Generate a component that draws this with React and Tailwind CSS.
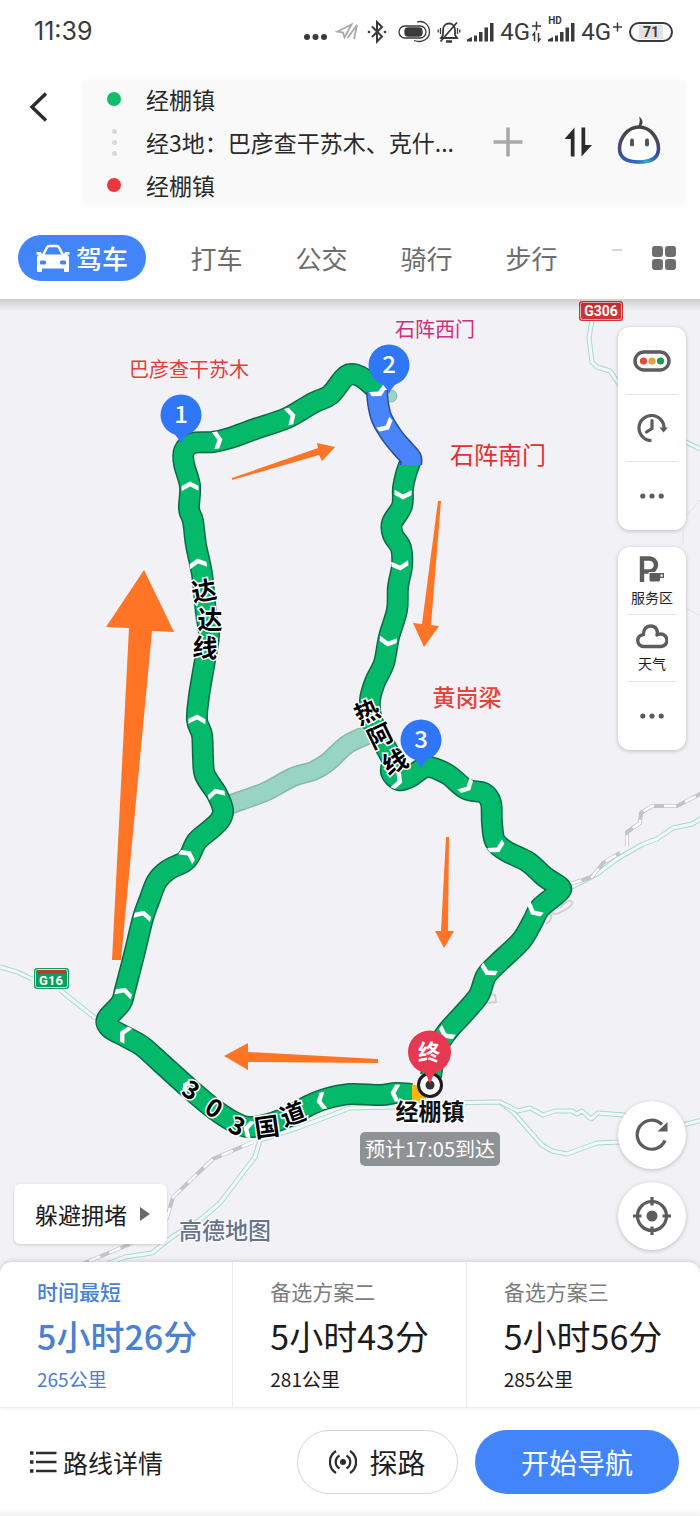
import React, { useState } from "react";

const FONT = "font-['Noto_Sans_CJK_SC',sans-serif]";

const TRAVEL_MODES = ["驾车", "打车", "公交", "骑行", "步行"];

const ROUTES = [
  { id: 1, title: "时间最短", time: "5小时26分", distance: "265公里" },
  { id: 2, title: "备选方案二", time: "5小时43分", distance: "281公里" },
  { id: 3, title: "备选方案三", time: "5小时56分", distance: "285公里" },
];

// Route geometry, in map units
const NORTH_LEG = [
  [412, 1094], [396, 1093], [380, 1095], [350, 1094], [325, 1099], [308, 1106], [285, 1118],
  [265, 1125], [248, 1127], [234, 1122], [214, 1109], [190, 1089], [160, 1062],
  [142, 1046], [126, 1037], [110, 1028], [107, 1019], [121, 1003], [125, 990], [134, 955],
  [143, 918], [149, 901], [157, 881], [168, 870], [184, 862], [190, 855], [197, 841],
  [211, 829], [220, 820], [223, 810], [217, 794], [205, 775], [203, 757],
  [202, 735], [197, 720], [199, 696], [205, 660], [209, 635], [206, 613], [202, 574],
  [196, 545], [193, 521], [189, 509], [190, 486], [184, 464], [184, 451],
  [193, 443], [213, 442], [230, 438], [255, 429], [287, 418], [313, 403],
  [330, 395], [343, 379], [351, 374], [363, 378], [378, 391],
];
const BLUE_LEG = [
  [377, 391], [378, 403], [382, 419], [393, 437], [404, 450], [411, 458], [411, 465],
];
const SOUTH_LEG = [
  [411, 460], [406, 474], [403, 488], [402, 506], [392, 523], [393, 535],
  [401, 548], [402, 566], [398, 587], [397, 610], [389, 637], [384, 663],
  [375, 682], [370, 700], [372, 720], [384, 744], [392, 760], [391, 772],
  [399, 780], [410, 777], [427, 767], [447, 774], [466, 789], [484, 793],
  [491, 803], [492, 823], [495, 841], [506, 851], [528, 862], [545, 877],
  [560, 887], [558, 893], [540, 908], [533, 921], [521, 941], [498, 963],
  [486, 976], [479, 995], [465, 1012], [447, 1032], [436, 1050], [431, 1076],
];
const SIDE_LEG = [
  [226, 806], [240, 801], [267, 791], [293, 777], [313, 771], [328, 762],
  [348, 744], [372, 733],
];

const CHEVRONS = [
  [218, 440, -8], [291, 416, -15], [190, 486, -92], [198, 563, -98],
  [197, 719, -88], [216, 793, -105], [188, 855, -55], [143, 915, -75],
  [124, 992, -72], [124, 1034, 208], [187, 1086, 215], [248, 1129, 195],
  [321, 1101, 170], [395, 1093, 182], [379, 392, 60], [386, 426, 50],
  [403, 495, 92], [400, 566, 85], [388, 642, 98], [398, 781, 20],
  [467, 787, 45], [497, 848, 60], [534, 911, 130], [488, 971, 120],
  [446, 1034, 125],
];

const ROADS = [
  "M592 320 589 338 592 362 597 367 610 371 619 384 640 420 686 442 700 449",
  "M0 967 17 972 32 979M60 990 95 1018",
  "M570 888 597 874 617 859 643 844 657 839 673 828 692 824 702 818",
  "M440 1103 500 1102 513 1112 542 1145 552 1151 567 1154 597 1143 620 1142 660 1135 683 1125 702 1120",
  "M500 1102 518 1111 530 1108 543 1115 555 1111 572 1111 577 1114 582 1111 591 1119 598 1113 623 1115 683 1124",
  "M395 1107 350 1108 300 1127 260 1140 255 1157 220 1203 200 1220 172 1237 152 1253 125 1257 107 1264",
];
const RAILS = [
  "M627 847V832L640 823 641 813 652 806 677 806 702 793",
  "M253 1142 213 1159 173 1197 167 1218 130 1244 82 1264",
  "M570 884 592 877 603 863 620 853",
];

const ARROWS = [
  "144,570 174,632 152,631 121,960 112,960 129,628 106,627",
  "335,447 322,461 319,455 232,480 232,478 318,448 317,443",
  "424,647 413,623 422,624 438,501 441,501 431,625 439,626",
  "444,948 435,931 441,931 446,837 449,837 448,931 454,931",
  "224,1056 248,1043 248,1052 378,1059 378,1063 248,1062 248,1070",
];

const ROAD_LABELS = [
  ["达", 204, 591, -10], ["达", 210, 620, 0], ["线", 205, 648, 4],
  ["热", 367, 712, -24], ["阿", 380, 736, -26], ["线", 395, 762, -26],
  ["3", 191, 1090, 32], ["0", 214, 1108, 32], ["3", 237, 1126, 26],
  ["国", 267, 1127, -8], ["道", 293, 1114, -20],
];

function smooth(pts) {
  let d = `M${pts[0][0]} ${pts[0][1]}`;
  for (let i = 0; i < pts.length - 1; i++) {
    const p0 = pts[i - 1] || pts[i];
    const p1 = pts[i];
    const p2 = pts[i + 1];
    const p3 = pts[i + 2] || p2;
    d += `C${p1[0] + (p2[0] - p0[0]) / 6} ${p1[1] + (p2[1] - p0[1]) / 6} ${
      p2[0] - (p3[0] - p1[0]) / 6
    } ${p2[1] - (p3[1] - p1[1]) / 6} ${p2[0]} ${p2[1]}`;
  }
  return d;
}

function Signal() {
  return (
    <svg viewBox="0 0 27 20" className="h-5 w-[27px]" fill="#3a3a3a">
      <path d="M0 19.500V17.500L5 15v4.500zM7 13.500h3v6H7zM12 10h3.500v9.500H12zM17.500 5.500H21v14h-3.500zM23 1h3.500v18.500H23z" />
    </svg>
  );
}

function StatusBar() {
  return (
    <div className="flex h-16 items-center justify-between pl-[34px] pr-[27px] text-[#3a3a3a]">
      <span className="font-['Inter',sans-serif] text-[25px]">11:39</span>
      <div className="flex items-center gap-1.5 font-['Roboto',sans-serif]">
        <div className="mr-1 flex items-center gap-2">
          <svg viewBox="0 0 24 24" className="h-6 w-6" fill="#3a3a3a">
            <circle cx="4" cy="17" r="3" />
            <circle cx="12.500" cy="17" r="3" />
            <circle cx="21" cy="17" r="3" />
          </svg>
          <svg viewBox="0 0 24 20" className="h-5 w-6" fill="none" stroke="#aaa" strokeWidth="1.800">
            <path d="M2.500 9.500 16.500 2.500 9.500 15.500 8 10.500z" />
            <path d="M12.500 16 22 3 19 17" />
          </svg>
          <svg viewBox="0 0 20 24" className="h-6 w-5" fill="none" stroke="#3a3a3a" strokeWidth="2">
            <path d="M5 6.500 15 16.500 10 21.500V2L15 7 5 17" />
            <circle cx="2" cy="12" r="1.300" fill="#3a3a3a" stroke="none" />
            <circle cx="18" cy="12" r="1.300" fill="#3a3a3a" stroke="none" />
          </svg>
        </div>
        <svg viewBox="0 0 34 24" className="h-6 w-[34px]" fill="none" stroke="#3a3a3a" strokeWidth="1.300">
          <rect x="2" y="6" width="27" height="12" rx="6" />
          <rect x="8" y="8" width="17" height="8" rx="3" fill="#3a3a3a" />
          <path d="M20 2C27 0 32.500 5 32.500 12S25 23.500 17 20.500" />
        </svg>
        <svg viewBox="0 0 24 24" className="h-6 w-6" fill="none" stroke="#3a3a3a" strokeWidth="1.800">
          <path d="M4 18h16l-2-3V10c0-4-2.500-6.500-6-6.500S6 6 6 10v5zM3.500 21.500 20 2.500" />
          <path d="M9 21.500h6" strokeWidth="2.500" />
          <path d="M3.500 8v6M1.200 9.500v3M20.500 8v6M22.800 9.500v3" strokeWidth="1.300" />
        </svg>
        <Signal />
        <span className="flex items-center">
          <span className="text-2xl">4G</span>
          <svg viewBox="0 0 12 22" className="h-[22px] w-3" fill="none" stroke="#3a3a3a" strokeWidth="1.500">
            <path d="M2 5h9M6.500 .500v9M4.500 20v-8l-2 2.500M8.500 12v8l2-2.500" />
          </svg>
        </span>
        <span className="relative">
          <span className="absolute -top-1.5 left-0 text-[10px] font-bold leading-none">HD</span>
          <Signal />
        </span>
        <span className="flex items-center">
          <span className="text-2xl">4G</span>
          <svg viewBox="0 0 12 22" className="h-[22px] w-3" fill="none" stroke="#3a3a3a" strokeWidth="1.500">
            <path d="M2 6h9M6.500 1.500v9" />
          </svg>
        </span>
        <span className="flex h-5 w-11 items-center justify-center rounded-full border-2 border-[#3a3a3a] bg-[#fdfdfd] text-sm font-bold leading-none">
          <span className="bg-[#e2e2e2] px-1">71</span>
        </span>
      </div>
    </div>
  );
}

function Waypoints() {
  return (
    <div className="mt-4 flex items-start pl-7 pr-[15px]">
      <button aria-label="返回" className="mt-3 mr-[33px]">
        <svg viewBox="0 0 22 30" className="h-[30px] w-[22px]" fill="none" stroke="#2c2c2c" strokeWidth="3.400">
          <path d="M18 1.500 4 15 18 28.500" />
        </svg>
      </button>
      <div className="flex min-w-0 flex-1 items-center rounded-md bg-[#f9f9f9] py-1 pl-6 pr-6 shadow-[0_0_6px_rgba(0,0,0,0.03)]">
        <div className="flex min-w-0 flex-1 flex-col gap-[13px] text-[23px] leading-[30px] text-[#2a2a2a]">
          <button className="flex items-center gap-[25px] text-left">
            <span className="size-3.5 rounded-full bg-[#0fbf6c]" />
            <span>经棚镇</span>
          </button>
          <button className="flex items-center gap-[25px] text-left">
            <span className="flex w-3.5 flex-col items-center gap-1.5">
              <span className="size-[5px] rounded-full bg-[#d9d9d9]" />
              <span className="size-[5px] rounded-full bg-[#d9d9d9]" />
              <span className="size-[5px] rounded-full bg-[#d9d9d9]" />
            </span>
            <span className="whitespace-nowrap">经3地：巴彦查干苏木、克什...</span>
          </button>
          <button className="flex items-center gap-[25px] text-left">
            <span className="size-3.5 rounded-full bg-[#e8383b]" />
            <span>经棚镇</span>
          </button>
        </div>
        <button aria-label="添加途经点" className="mr-10">
          <svg viewBox="0 0 30 30" className="size-[30px]" stroke="#a8a8a8" strokeWidth="3.600">
            <path d="M.5 15h29M15 .5v29" />
          </svg>
        </button>
        <button aria-label="交换起终点" className="mr-6">
          <svg viewBox="0 0 30 30" className="size-[30px]" fill="#2b2b2b">
            <path d="M11.500.500V29.500H7.800V12H1.500zM18.500.500h3.700V18H29L18.500 29.500z" />
          </svg>
        </button>
        <button aria-label="语音助手" className="mb-1">
          <svg viewBox="0 0 44 48" className="h-12 w-11" fill="none">
            <defs>
              <linearGradient id="face" x1="0" y1="0" x2="0" y2="1">
                <stop offset="0" stopColor="#444" />
                <stop offset=".35" stopColor="#4a4b58" />
                <stop offset=".75" stopColor="#3a4aa0" />
                <stop offset="1" stopColor="#2f62c4" />
              </linearGradient>
              <radialGradient id="chin" cx=".68" cy="1" r=".35">
                <stop offset="0" stopColor="#2fb4c8" />
                <stop offset="1" stopColor="#2f62c4" stopOpacity="0" />
              </radialGradient>
            </defs>
            <path d="M22 11C10.500 11 2.500 22.500 2.500 32.500 2.500 42 10 46 22 46S41.500 42 41.500 32.500C41.500 22.500 33.500 11 22 11z" fill="#fff" stroke="url(#face)" strokeWidth="3.600" />
            <path d="M22 11C10.500 11 2.500 22.500 2.500 32.500 2.500 42 10 46 22 46S41.500 42 41.500 32.500C41.500 22.500 33.500 11 22 11z" stroke="url(#chin)" strokeWidth="3.600" />
            <path d="M21 11C22.500 7 23.500 5 22 .5 27 4 26 8 23.500 11z" fill="#444" />
            <rect x="13" y="22.500" width="4" height="8" rx="2" fill="#555" />
            <rect x="28" y="22.500" width="4" height="8" rx="2" fill="#555" />
          </svg>
        </button>
      </div>
    </div>
  );
}

function CarIcon() {
  return (
    <svg viewBox="0 0 34 28" className="h-7 w-[34px]">
      <path d="M6.500 12 11 3.500C11.500 2.500 12.500 2 13.500 2h7c1 0 2 .500 2.500 1.500L27.500 12" fill="none" stroke="#fff" strokeWidth="2.500" />
      <path fillRule="evenodd" fill="#fff" d="M.500 8H5l1 2.500h22L29 8h4.500v2.500h-2.500c1.500 1 2 2 2 3.500V27a1 1 0 0 1-1 1h-3a1 1 0 0 1-1-1v-2.500H6V27a1 1 0 0 1-1 1H2a1 1 0 0 1-1-1V14c0-1.500.500-2.500 2-3.500H.500zM5 16.500c-1.500 0-1.500 4 0 4h3.500c2 0 2-4 0-4zM25.500 16.500c-2 0-2 4 0 4H29c1.500 0 1.500-4 0-4z" />
    </svg>
  );
}

function ModeTabs({ mode, onChange }) {
  return (
    <nav className="mt-[31px] flex items-center justify-between pb-[18px] pl-[18px] pr-6">
      <div className="flex items-center text-[26px] leading-none">
        {TRAVEL_MODES.map((m) => (
          <button
            key={m}
            onClick={() => onChange(m)}
            className={
              m === mode
                ? "mr-[18px] flex h-[46px] items-center gap-1.5 rounded-full bg-[#4285f8] px-[18px] font-medium text-white"
                : "h-[46px] w-[105px] text-[#6d6d6d]"
            }
          >
            {m === mode && <CarIcon />}
            {m}
          </button>
        ))}
      </div>
      <div className="flex items-center gap-[30px]">
        <span className="mb-4 h-0.5 w-2.5 bg-[#d4d4d4]" />
        <button aria-label="更多出行方式" className="grid grid-cols-2 gap-0.5">
          <span className="size-[11px] rounded-[3px] bg-[#6d6d6d]" />
          <span className="size-[11px] rounded-[3px] bg-[#6d6d6d]" />
          <span className="size-[11px] rounded-[3px] bg-[#6d6d6d]" />
          <span className="size-[11px] rounded-[3px] bg-[#6d6d6d]" />
        </button>
      </div>
    </nav>
  );
}

function Line({ d, edge, fill, outer = 22, inner = 19 }) {
  return (
    <g fill="none" strokeLinejoin="round">
      <path d={d} stroke={edge} strokeWidth={outer} />
      <path d={d} stroke={fill} strokeWidth={inner} />
    </g>
  );
}

function Pin({ x, y, label }) {
  return (
    <g>
      <path d={`M${x - 17} ${y + 11}Q${x - 3} ${y + 20} ${x} ${y + 29}Q${x + 3} ${y + 20} ${x + 17} ${y + 11}z`} fill="#3076f8" />
      <circle cx={x} cy={y} r="20.500" fill="#3076f8" />
      <text x={x} y={y + 8} textAnchor="middle" fill="#fff" fontWeight="500" className="text-[24px]">
        {label}
      </text>
    </g>
  );
}

// The map runs 12 units below the visible edge, under the rounded route cards
function MapCanvas() {
  return (
    <svg viewBox="0 299 700 975" className={`block h-auto w-full bg-[#f1f1f6] ${FONT}`}>
      {ROADS.map((d) => (
        <Line key={d} d={d} edge="#abd9ca" fill="#f0f9f8" outer={5} inner={3} />
      ))}
      {RAILS.map((d) => (
        <g key={d} fill="none">
          <path d={d} stroke="#c3c3ca" strokeWidth="4" />
          <path d={d} stroke="#fff" strokeWidth="2.500" strokeDasharray="12 10" />
        </g>
      ))}
      <path d="M686 516 700 500M683 530v14M686 608l14 8" fill="none" stroke="#e0e0e6" />
      <path d="M560 908c8-12 18-6 8 0s-14 8-16 4M546 918c6-10 8 2 0 6M486 1000l2-6 7 1 1 7-9 1" fill="none" stroke="#cfcfd6" strokeWidth="2" />
      <circle cx="391" cy="396" r="6" fill="#9dd3c3" stroke="#84b9a9" />

      <Line d={smooth(SIDE_LEG)} edge="#86b9aa" fill="#99d3c1" outer={20} inner={17} />
      <Line d={smooth(NORTH_LEG)} edge="#086a45" fill="#05b96a" />
      <Line d={smooth(SOUTH_LEG)} edge="#086a45" fill="#05b96a" />
      <Line d={smooth(BLUE_LEG)} edge="#2a4d9e" fill="#4a84fa" />
      <path d="M412 1094h14" stroke="#fbb50a" strokeWidth="18" />

      {CHEVRONS.map(([x, y, a]) => (
        <path
          key={`${x}-${y}`}
          d="M-5-8.500H0L4.500 0 0 8.500H-5L-.500 0z"
          fill="#fff"
          transform={`translate(${x} ${y}) rotate(${a})`}
        />
      ))}
      {ARROWS.map((p) => (
        <polygon key={p} points={p} fill="#ff7425" />
      ))}

      <g className="text-[25px]" fontWeight="700" fill="#000" stroke="#fff" strokeWidth="3" textAnchor="middle">
        {ROAD_LABELS.map(([t, x, y, a]) => (
          <text key={`${x}-${y}`} y="9" className="[paint-order:stroke]" transform={`translate(${x} ${y}) rotate(${a})`}>
            {t}
          </text>
        ))}
      </g>

      <Pin x={181} y={415} label="1" />
      <Pin x={389} y={365} label="2" />
      <Pin x={421} y={740} label="3" />

      <circle cx="430" cy="1085" r="11.500" fill="#fff" stroke="#1c1c1c" strokeWidth="3" />
      <circle cx="430" cy="1085" r="4.500" fill="#333" />
      <path d="M415 1066Q427 1072 430 1084 433 1072 444 1066z" fill="#e63850" />
      <circle cx="429.500" cy="1052" r="21.500" fill="#e63850" />
      <g textAnchor="middle">
        <text x="429" y="1060" fill="#fff" fontWeight="700" className="text-[22px]">终</text>
        <text x="430" y="1120" fill="#111" stroke="#fff" strokeWidth="3" fontWeight="700" className="text-[23px] [paint-order:stroke]">
          经棚镇
        </text>
        <rect x="360" y="1132" width="140" height="34" rx="5" fill="#8f9294" />
        <text x="430" y="1157" fill="#fff" className="text-[20px]">预计17:05到达</text>
        <text x="189" y="377" fill="#e2403c" className="text-[20px]">巴彦查干苏木</text>
        <text x="435" y="337" fill="#cf2f7c" className="text-[20px]">石阵西门</text>
        <text x="498" y="464" fill="#e32f33" className="text-[24px]">石阵南门</text>
        <text x="467" y="706" fill="#e8423c" fontWeight="500" className="text-[23px]">黄岗梁</text>
        <text x="225" y="1239" fill="#66728f" stroke="#fff" strokeWidth="2" fontWeight="500" className="text-[23px] [paint-order:stroke]">
          高德地图
        </text>
        <g className="font-['Roboto',sans-serif]" fill="#fff" fontWeight="700">
          <rect x="579" y="301" width="44" height="20" rx="3" fill="#cf3433" />
          <rect x="580.500" y="302.500" width="41" height="17" rx="2" fill="none" stroke="#f0b8b4" />
          <text x="601" y="316" className="text-[14px]">G306</text>
          <rect x="34" y="968" width="35" height="21" rx="3" fill="#0c9c60" />
          <rect x="35.500" y="969.500" width="32" height="18" rx="2" fill="none" stroke="#c9eadb" />
          <rect x="37" y="970" width="29" height="4" fill="#b3402c" />
          <text x="51" y="985" className="text-[13px]">G16</text>
        </g>
      </g>
    </svg>
  );
}

function Dots() {
  return (
    <svg viewBox="0 0 24 6" className="h-1.5 w-6" fill="#5c5c5c">
      <circle cx="2.800" cy="3" r="2.600" />
      <circle cx="12" cy="3" r="2.600" />
      <circle cx="21.200" cy="3" r="2.600" />
    </svg>
  );
}

function ToolPanel({ children }) {
  return (
    <div className="flex w-[68px] flex-col items-center divide-y divide-[#e6e6e8] rounded-xl bg-white px-2 py-px shadow-[0_1px_4px_rgba(0,0,0,0.22)]">
      {children}
    </div>
  );
}

function ToolButton({ label, text, children }) {
  return (
    <button aria-label={label} className="flex h-[67px] w-full flex-col items-center justify-center gap-1 text-sm leading-5 text-[#1c1c1c]">
      {children}
      {text}
    </button>
  );
}

function MapTools() {
  return (
    <div className="absolute inset-y-0 right-3.5 flex flex-col justify-between pb-6 pt-7">
      <div className="flex flex-col gap-[17px]">
        <ToolPanel>
          <ToolButton label="路况">
            <svg viewBox="0 0 38 22" className="h-[22px] w-[38px]">
              <rect x="2" y="2" width="34" height="18" rx="9" fill="#fff" stroke="#5c5c5c" strokeWidth="3.400" />
              <circle cx="10.500" cy="11" r="3.600" fill="#e54a35" />
              <circle cx="19" cy="11" r="3.600" fill="#eda03a" />
              <circle cx="27.500" cy="11" r="3.600" fill="#17a04a" />
            </svg>
          </ToolButton>
          <ToolButton label="未来出行">
            <svg viewBox="0 0 32 32" className="size-8" fill="none" stroke="#5c5c5c" strokeWidth="3.200">
              <path d="M15.500 28.500A12.500 12.500 0 1 1 28 16.500" />
              <path d="M16 8.500v8l-5.500 3.500" strokeLinejoin="round" strokeLinecap="round" />
              <path d="M23.500 15.500h8.500L27.500 20.500z" fill="#5c5c5c" stroke="none" />
            </svg>
          </ToolButton>
          <ToolButton label="更多">
            <Dots />
          </ToolButton>
        </ToolPanel>
        <ToolPanel>
          <ToolButton text="服务区">
            <svg viewBox="0 0 26 27" className="h-[27px] w-[26px]" fill="none">
              <path d="M3 26V2.500h7.500a6.500 6.500 0 0 1 0 13H3" stroke="#5c5c5c" strokeWidth="4.400" />
              <path d="M10 16.500H25.500v6h-4V24a2 2 0 0 1-2 2H12a2 2 0 0 1-2-2z" fill="#5c5c5c" stroke="#fff" />
              <path d="M21.500 18.500h2.200v2.200h-2.200z" fill="#fff" />
            </svg>
          </ToolButton>
          <ToolButton text="天气">
            <svg viewBox="0 0 32 26" className="h-[26px] w-8" fill="none" stroke="#5c5c5c" strokeWidth="3.400" strokeLinejoin="round">
              <path d="M8 23.500a6 6 0 0 1-.500-12C7.500 6 10.500 3 14.500 3c4 0 6.500 2.500 7 6.500l-.500 2.500c1-.800 2-1 3.500-1a6.200 6.200 0 0 1 .500 12.500z" />
            </svg>
          </ToolButton>
          <ToolButton label="更多图层">
            <Dots />
          </ToolButton>
        </ToolPanel>
      </div>
      <div className="flex flex-col gap-[13px]">
        <button aria-label="刷新路线" className="flex size-[68px] items-center justify-center rounded-full bg-white shadow-[0_1px_4px_rgba(0,0,0,0.22)]">
          <svg viewBox="0 0 34 34" className="size-[34px]" fill="none" stroke="#5c5c5c" strokeWidth="3.200">
            <path d="M30 22.500A14.500 14.500 0 1 1 27 6.500" />
            <path d="M32.500 4v9.500H22.500z" fill="#5c5c5c" stroke="none" />
          </svg>
        </button>
        <button aria-label="定位" className="flex size-[68px] items-center justify-center rounded-full bg-white shadow-[0_1px_4px_rgba(0,0,0,0.22)]">
          <svg viewBox="0 0 38 38" className="size-[38px]" fill="none" stroke="#5c5c5c" strokeWidth="3.200">
            <circle cx="19" cy="19" r="14.500" />
            <circle cx="19" cy="19" r="5.500" fill="#5c5c5c" stroke="none" />
            <path d="M19 0v8.500M19 29.500V38M0 19h8.500M29.500 19H38" />
          </svg>
        </button>
      </div>
    </div>
  );
}

function RouteOptions({ selected, onSelect }) {
  return (
    <div className="relative -mt-3 grid grid-cols-3 divide-x divide-[#ececec] rounded-t-xl border-b border-[#ececec] bg-white shadow-[0_-1px_5px_rgba(0,0,0,0.15)]">
      {ROUTES.map((r) => {
        const active = r.id === selected;
        return (
          <button
            key={r.id}
            onClick={() => onSelect(r.id)}
            aria-pressed={active}
            className={`flex flex-col items-start pb-3.5 pl-[37px] pt-[15px] text-left ${
              active ? "text-[#4a80d4]" : "text-[#1c1c1c]"
            }`}
          >
            <span className={`text-[21px] leading-7 ${active ? "font-medium" : "text-[#7c7c7c]"}`}>{r.title}</span>
            <span className={`mt-2 whitespace-nowrap text-[34px] leading-[46px] ${active ? "font-medium" : ""}`}>{r.time}</span>
            <span className="mt-1.5 text-[19px] leading-7">{r.distance}</span>
          </button>
        );
      })}
    </div>
  );
}

function ActionBar() {
  return (
    <div className="flex items-center bg-white pb-[22px] pl-[30px] pr-[21px] pt-[22px] shadow-[inset_0_-8px_8px_-6px_rgba(0,0,0,0.08)]">
      <button className="flex items-center gap-1.5 text-[25px] leading-none text-[#1f1f1f]">
        <svg viewBox="0 0 27 24" className="h-6 w-[27px]" stroke="#2c2c2c" strokeWidth="2.400">
          <path d="M6 3h20.500M6 12h20.500M6 21h20.500" />
          <path d="M0 3h3.500M0 12h3.500M0 21h3.500" strokeWidth="3.400" />
        </svg>
        路线详情
      </button>
      <button className="ml-auto mr-[17px] flex h-16 w-[161px] items-center justify-center gap-3 rounded-full border border-[#d5d5d5] text-[28px] leading-none text-[#1f1f1f]">
        <svg viewBox="0 0 28 26" className="h-[26px] w-7" fill="none" stroke="#2c2c2c" strokeWidth="2.200">
          <circle cx="14" cy="13" r="3" fill="#2c2c2c" stroke="none" />
          <path d="M10.500 6.500a7.500 7.500 0 0 0 0 13M17.500 6.500a7.500 7.500 0 0 1 0 13M7 2a13 13 0 0 0 0 22M21 2a13 13 0 0 1 0 22" />
        </svg>
        探路
      </button>
      <button className="h-16 w-[204px] rounded-full bg-[#4285fa] text-[28px] leading-none text-white">
        开始导航
      </button>
    </div>
  );
}

function App() {
  const [mode, setMode] = useState("驾车");
  const [route, setRoute] = useState(1);

  return (
    <div className={`bg-[#fefefe] ${FONT}`}>
      <header>
        <StatusBar />
        <Waypoints />
        <ModeTabs mode={mode} onChange={setMode} />
      </header>
      <main>
        <div className="relative">
          <MapCanvas />
          <div className="absolute inset-x-0 top-0 h-3 bg-linear-to-b from-black/15 to-transparent" />
          <button className="absolute bottom-[30px] left-3.5 flex h-[60px] items-center gap-3 rounded-md bg-white pl-[21px] pr-4 text-[23px] leading-none text-[#1c1c1c] shadow-[0_1px_3px_rgba(0,0,0,0.15)]">
            躲避拥堵
            <svg viewBox="0 0 12 16" className="h-4 w-3" fill="#6a6a6a">
              <path d="M1 1 11 8 1 15z" />
            </svg>
          </button>
          <MapTools />
        </div>
        <RouteOptions selected={route} onSelect={setRoute} />
        <ActionBar />
      </main>
    </div>
  );
}

export default App;
